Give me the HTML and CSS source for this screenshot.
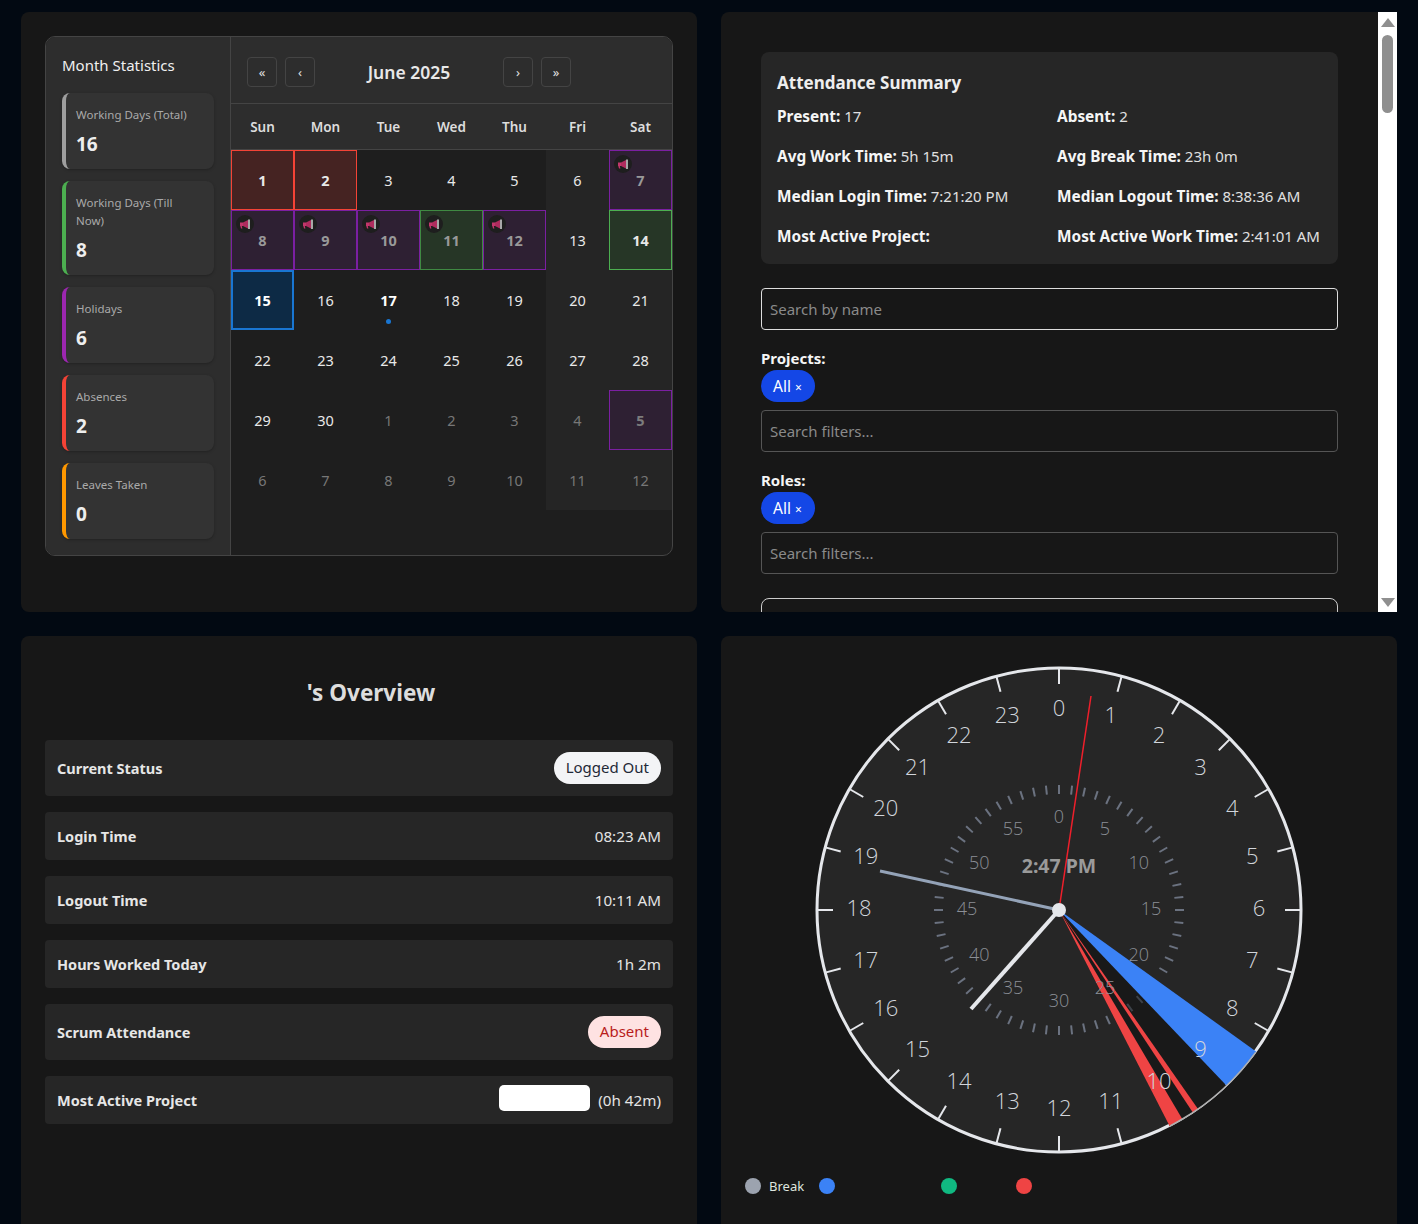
FILE: index.html
```html
<!DOCTYPE html>
<html lang="en">
<head>
<meta charset="utf-8">
<title>Dashboard</title>
<link rel="stylesheet" href="styles.css">
</head>
<body>
<main class="dashboard">

<section class="panel panel-calendar">
  <div class="calendar">
    <aside class="stats">
      <h3 class="stats-title">Month Statistics</h3>
      <div class="stat stat-grey"><div class="stat-label">Working Days (Total)</div><div class="stat-value">16</div></div>
      <div class="stat stat-green"><div class="stat-label">Working Days (Till Now)</div><div class="stat-value">8</div></div>
      <div class="stat stat-purple"><div class="stat-label">Holidays</div><div class="stat-value">6</div></div>
      <div class="stat stat-red"><div class="stat-label">Absences</div><div class="stat-value">2</div></div>
      <div class="stat stat-orange"><div class="stat-label">Leaves Taken</div><div class="stat-value">0</div></div>
    </aside>
    <div class="cal-main">
      <div class="cal-head">
        <button class="nav-btn">«</button>
        <button class="nav-btn">‹</button>
        <div class="cal-title">June 2025</div>
        <button class="nav-btn">›</button>
        <button class="nav-btn">»</button>
      </div>
      <div class="weekdays">
        <div>Sun</div><div>Mon</div><div>Tue</div><div>Wed</div><div>Thu</div><div>Fri</div><div>Sat</div>
      </div>
      <div class="days" id="days"></div>
    </div>
  </div>
</section>

<section class="panel panel-attendance">
  <div class="attendance-scroll">
    <div class="summary">
      <h3 class="summary-title">Attendance Summary</h3>
      <div class="summary-grid">
        <p><b>Present:</b> 17</p><p><b>Absent:</b> 2</p>
        <p><b>Avg Work Time:</b> 5h 15m</p><p><b>Avg Break Time:</b> 23h 0m</p>
        <p><b>Median Login Time:</b> 7:21:20 PM</p><p><b>Median Logout Time:</b> 8:38:36 AM</p>
        <p><b>Most Active Project:</b></p><p><b>Most Active Work Time:</b> 2:41:01 AM</p>
      </div>
    </div>
    <input class="search search-name" placeholder="Search by name">
    <div class="filter">
      <label class="filter-label">Projects:</label>
      <span class="pill">All <small>×</small></span>
      <input class="search" placeholder="Search filters...">
    </div>
    <div class="filter">
      <label class="filter-label">Roles:</label>
      <span class="pill">All <small>×</small></span>
      <input class="search" placeholder="Search filters...">
    </div>
    <div class="long-box"></div>
  </div>
  <div class="scrollbar">
    <svg class="arrow" width="14" height="9" viewBox="0 0 14 9"><path d="M7 0L14 9H0Z"/></svg>
    <div class="thumb"></div>
    <svg class="arrow arrow-down" width="14" height="9" viewBox="0 0 14 9"><path d="M7 9L14 0H0Z"/></svg>
  </div>
</section>

<section class="panel panel-overview">
  <h2 class="overview-title"><span class="name-gap"></span>'s Overview</h2>
  <div class="rows">
    <div class="row"><b>Current Status</b><span class="badge badge-light">Logged Out</span></div>
    <div class="row"><b>Login Time</b><span>08:23 AM</span></div>
    <div class="row"><b>Logout Time</b><span>10:11 AM</span></div>
    <div class="row"><b>Hours Worked Today</b><span>1h 2m</span></div>
    <div class="row"><b>Scrum Attendance</b><span class="badge badge-absent">Absent</span></div>
    <div class="row"><b>Most Active Project</b><span class="project"><i class="redact"></i>(0h 42m)</span></div>
  </div>
</section>

<section class="panel panel-clock">
  <svg class="clock" id="clock" width="490" height="490" viewBox="814 665 490 490"></svg>
  <div class="legend">
    <span class="dot dot-grey"></span><span class="legend-text">Break</span>
    <span class="dot dot-blue"></span><span class="legend-gap-a"></span>
    <span class="dot dot-green"></span><span class="legend-gap-b"></span>
    <span class="dot dot-red"></span>
  </div>
</section>

</main>
<script src="clock.js"></script>
</body>
</html>
```
FILE: styles.css
```css
* { box-sizing: border-box; }
html, body { margin: 0; height: 1224px; overflow: hidden; }
body {
  background: #020912;
  color: #e6e6e6;
  font-family: "Noto Sans", "Open Sans", "Liberation Sans", sans-serif;
}
.dashboard {
  display: grid;
  grid-template-columns: 676px 676px;
  grid-auto-rows: 600px;
  gap: 24px;
  padding: 12px 21px;
}
.panel { background: #171717; border-radius: 8px; }

/* calendar panel */
.panel-calendar { padding: 24px; }
.calendar {
  display: flex;
  height: 520px;
  border: 1px solid #444;
  border-radius: 10px;
  overflow: hidden;
  background: #1e1e1e;
}
.stats {
  width: 185px;
  flex: none;
  background: #2d2d2d;
  border-right: 1px solid #444;
  padding: 16px 16px 0;
  display: flex;
  flex-direction: column;
  gap: 12px;
}
.stats-title { margin: 0; font-size: 15px; line-height: 24px; font-weight: 400; color: #f0f0f0; height: 28px; }
.stat {
  background: #333;
  border-left: 4px solid #999;
  border-radius: 8px;
  padding: 13px 18px 11px 10px;
  box-shadow: 0 1px 3px rgba(0,0,0,.25);
}
.stat-grey { border-left-color: #9e9e9e; }
.stat-green { border-left-color: #4caf50; }
.stat-purple { border-left-color: #9c27b0; }
.stat-red { border-left-color: #f44336; }
.stat-orange { border-left-color: #ff9800; }
.stat-label { font-size: 11.5px; line-height: 18px; color: #aaa; }
.stat-value { font-size: 19px; line-height: 28px; margin-top: 6px; font-weight: 700; color: #eee; }

.cal-main { flex: 1; min-width: 0; }
.cal-head {
  height: 67px;
  background: #2d2d2d;
  border-bottom: 1px solid #444;
  padding: 20px 16px 0;
  display: flex;
  gap: 8px;
}
.nav-btn {
  width: 30px;
  height: 30px;
  padding: 0;
  background: transparent;
  border: 1px solid #444;
  border-radius: 4px;
  color: #e0e0e0;
  font-family: inherit;
  font-size: 13px;
}
.cal-title { width: 172px; text-align: center; font-size: 17.5px; line-height: 30px; font-weight: 600; color: #e8e8e8; }
.weekdays {
  display: grid;
  grid-template-columns: repeat(7, 63px);
  height: 46px;
  background: #2d2d2d;
  border-bottom: 1px solid #444;
  font-size: 13.5px;
  font-weight: 600;
  color: #ddd;
  text-align: center;
  line-height: 46px;
}
.days { display: grid; grid-template-columns: repeat(7, 63px); grid-auto-rows: 60px; }
.day {
  position: relative;
  display: flex;
  align-items: center;
  justify-content: center;
  padding-bottom: 1px;
  font-size: 14.5px;
  color: #e8e8e8;
  border: 1px solid transparent;
}
.weekend { background: #252525; }
.other { color: #777; }
.absent { background: #452322; border-color: #f44336; font-weight: 700; }
.present { background: #263626; border-color: #4caf50; font-weight: 700; }
.holiday { background: #2e2033; border-color: #7b1fa2; font-weight: 700; color: #999; }
.other.holiday { color: #7c7c7c; }
.holiday-green { background: #263626; border-color: #3f8a42; font-weight: 700; color: #999; }
.selected { background: #0d2a45; border: 2px solid #1976d2; font-weight: 700; color: #fff; }
.today { font-weight: 700; color: #fff; }
.today::after {
  content: "";
  position: absolute;
  left: 28px;
  bottom: 5px;
  width: 5px;
  height: 5px;
  border-radius: 50%;
  background: #1976d2;
}
.megaphone {
  position: absolute;
  left: 4px;
  top: 4px;
  width: 18px;
  height: 18px;
  border-radius: 50%;
  background: #1e1e1e;
  display: flex;
  align-items: center;
  justify-content: center;
}

/* attendance panel */
.panel-attendance {
  border-radius: 8px 0 0 8px;
  height: 600px;
  display: flex;
  overflow: hidden;
}
.attendance-scroll { flex: 1; min-width: 0; padding: 40px 40px 0; overflow: hidden; }
.scrollbar {
  width: 19px;
  flex: none;
  background: #fff;
  display: flex;
  flex-direction: column;
  align-items: center;
  padding-top: 6px;
}
.arrow { display: block; fill: #8f8f8f; }
.arrow-down { margin-top: 485px; }
.thumb { width: 11px; height: 78px; margin-top: 8px; border-radius: 6px; background: #8f8f8f; }
.summary { background: #262626; border-radius: 8px; padding: 16px; height: 212px; }
.summary-title { margin: 0; font-size: 17px; line-height: 30px; font-weight: 700; color: #eee; }
.summary-grid { display: grid; grid-template-columns: 280px 1fr; grid-auto-rows: 40px; margin-top: 6px; }
.summary-grid p { margin: 0; font-size: 15px; line-height: 24px; white-space: nowrap; color: #e0e0e0; }
.summary-grid b { color: #f5f5f5; font-size: 15.4px; }
.search {
  display: block;
  width: 100%;
  height: 42px;
  padding: 0 8px;
  background: #171717;
  border: 1px solid #555;
  border-radius: 4px;
  color: #eee;
  font-family: inherit;
  font-size: 15px;
}
.search::placeholder { color: #8a8a8a; opacity: 1; }
.search-name { margin-top: 24px; border-color: #ddd; }
.filter { margin-top: 16px; }
.filter-label { display: block; font-size: 15px; line-height: 24px; font-weight: 700; color: #f5f5f5; }
.pill {
  display: block;
  width: 54px;
  height: 32px;
  padding: 0 12px;
  border-radius: 16px;
  background: #1447e6;
  color: #fff;
  font-size: 15.5px;
  line-height: 32px;
}
.pill small { font-size: 12px; }
.filter .search { margin-top: 8px; }
.long-box { margin-top: 24px; height: 200px; border: 1px solid #ccc; border-radius: 8px; }

/* overview panel */
.panel-overview { padding: 40px 24px 0; }
.overview-title { margin: 0 0 30px; height: 34px; text-align: center; font-size: 22.5px; line-height: 34px; font-weight: 700; color: #ddd; }
.name-gap { display: inline-block; width: 24px; }
.rows { display: flex; flex-direction: column; gap: 16px; }
.row {
  display: flex;
  justify-content: space-between;
  align-items: center;
  padding: 12px;
  min-height: 48px;
  background: #262626;
  border-radius: 4px;
  font-size: 15.2px;
  line-height: 22px;
  color: #e4e4e4;
}
.row > b { color: #e6e6e6; font-size: 14.5px; margin-bottom: 1px; }
.row > span { margin-bottom: 1px; }
.row > .badge { height: 32px; margin: 0; padding: 0 12px 1px; border-radius: 16px; line-height: 31px; font-size: 15px; }
.badge-light { background: #f3f4f6; color: #1f2937; }
.badge-absent { background: #fee2e2; color: #b91c1c; }
.project { display: flex; align-items: center; gap: 8px; }
.redact { display: block; width: 91px; height: 26px; margin: -3px 0 0; background: #fff; border-radius: 5px; }

/* clock panel */
.panel-clock { padding-top: 29px; }
.clock { display: block; margin: 0 auto; }
.legend {
  display: flex;
  align-items: center;
  margin: 21px 0 0 24px;
  height: 20px;
  font-size: 13px;
  color: #dfe5df;
}
.dot { width: 16px; height: 16px; border-radius: 50%; flex: none; }
.dot-grey { background: #9ca3af; }
.dot-blue { background: #3b82f6; }
.dot-green { background: #10b981; }
.dot-red { background: #ef4444; }
.legend-text { margin: 0 15px 0 8px; }
.legend-gap-a { width: 106px; }
.legend-gap-b { width: 59px; }

/* clock svg parts */
.face { fill: #262626; stroke: #e5e7eb; stroke-width: 3; }
.ring-edge { fill: none; stroke: #b0b0b0; stroke-width: 1.5; }
.hour-tick { stroke: #e5e7eb; stroke-width: 2; }
.min-tick { stroke: #6b7280; stroke-width: 2; }
.min-tick-dim { stroke: #3d4249; stroke-width: 2; }
.hour-label { font-size: 22px; font-weight: 300; fill: #d1d5db; text-anchor: middle; font-family: "Open Sans", "Noto Sans", sans-serif; }
.min-label { font-size: 18px; font-weight: 300; fill: #8b8f96; text-anchor: middle; font-family: "Open Sans", "Noto Sans", sans-serif; }
.time-text { font-size: 19.5px; font-weight: 700; fill: #9a9a9a; text-anchor: middle; }
.hand-sec { stroke: #ef1f2b; stroke-width: 1.5; }
.hand-min { stroke: #94a3b8; stroke-width: 3; }
.hand-hour { stroke: #e5e7eb; stroke-width: 4; }
.hub { fill: #e5e7eb; }
.sec-blue { fill: #3b82f6; }
.sec-dark { fill: #191919; }
.sec-red { fill: #ef4444; }
```
FILE: clock.js
```js
(function () {
  var NS = 'http://www.w3.org/2000/svg';
  var CX = 1059, CY = 910;
  var svg = document.getElementById('clock');

  function el(name, attrs, text) {
    var n = document.createElementNS(NS, name);
    for (var k in attrs) n.setAttribute(k, attrs[k]);
    if (text !== undefined) n.textContent = text;
    svg.appendChild(n);
    return n;
  }
  function pt(deg, r) {
    var a = deg * Math.PI / 180;
    return [CX + r * Math.sin(a), CY - r * Math.cos(a)];
  }
  function tick(deg, r1, r2, cls) {
    var a = pt(deg, r1), b = pt(deg, r2);
    el('line', { x1: a[0], y1: a[1], x2: b[0], y2: b[1], 'class': cls });
  }

  el('circle', { cx: CX, cy: CY, r: 242, 'class': 'face' });

  [['sec-dark', 'M1059 910L1226.7 1085.8A243 243 0 0 1 1169.7 1126.3Z'],
   ['sec-blue', 'M1059 910L1256.4 1051.7A243 243 0 0 1 1226.7 1085.8Z'],
   ['sec-red', 'M1059 910L1198 1109A243 243 0 0 1 1193 1112.7Z'],
   ['sec-red', 'M1059 910L1182.4 1119.3A243 243 0 0 1 1169.7 1126.3Z']
  ].forEach(function (s) { el('path', { d: s[1], 'class': s[0] }); });
  el('path', { d: 'M1255.8 1052.1A242.5 242.5 0 0 1 1182.4 1119A242.5 242.5 0 0 1 1170 1126', 'class': 'ring-edge' });

  for (var m = 0; m < 60; m++) {
    if (m === 21 || m === 22 || m === 25) continue;
    tick(m * 6, 116, 125, (m === 23 || m === 24) ? 'min-tick-dim' : 'min-tick');
  }
  for (var h = 0; h < 24; h++) {
    if (h === 9 || h === 10) continue;
    tick(h * 15, 226, 242, 'hour-tick');
  }
  for (h = 0; h < 24; h++) {
    var p = pt(h * 15, 200);
    el('text', { x: p[0], y: p[1] + 6, 'class': 'hour-label' }, String(h));
  }
  for (m = 0; m < 60; m += 5) {
    var q = pt(m * 6, 92);
    el('text', { x: q[0], y: q[1] + 4.5, 'class': 'min-label' }, String(m));
  }
  el('text', { x: CX, y: 873, 'class': 'time-text' }, '2:47 PM');
  el('line', { x1: CX, y1: CY, x2: 1091, y2: 696, 'class': 'hand-sec' });
  el('line', { x1: CX, y1: CY, x2: 880, y2: 871, 'class': 'hand-min' });
  el('line', { x1: CX, y1: CY, x2: 971, y2: 1009, 'class': 'hand-hour' });
  el('circle', { cx: CX, cy: CY, r: 7, 'class': 'hub' });
})();

(function () {
  var days = document.getElementById('days');
  var ICON = '<span class="megaphone"><svg width="12" height="12" viewBox="0 0 12 12">' +
    '<path d="M1 4.5H4V8H2.8L3.4 10.4H2L1.3 8H1Z" fill="#c2366b"/>' +
    '<path d="M4 4.5L9 2V10.4L4 8Z" fill="#b02c5e"/>' +
    '<path d="M9 1.4H11V11H9Z" fill="#a8a8a8"/></svg></span>';
  var spec = {
    '1': 'absent', '2': 'absent',
    '7': 'holiday m', '8': 'holiday m', '9': 'holiday m', '10': 'holiday m',
    '11': 'holiday-green m', '12': 'holiday m', '14': 'present',
    '15': 'selected', '17': 'today'
  };
  function cell(label, other, idx, extra) {
    var d = document.createElement('div');
    var cls = 'day';
    var col = idx % 7;
    if (col >= 5) cls += ' weekend';
    if (other) cls += ' other';
    var c = extra || '';
    var hasIcon = / m$/.test(c);
    c = c.replace(/ m$/, '');
    if (c) cls += ' ' + c;
    d.className = cls;
    d.innerHTML = (hasIcon ? ICON : '') + label;
    days.appendChild(d);
  }
  var i = 0, n;
  for (n = 1; n <= 30; n++) { cell(n, false, i, spec[n]); i++; }
  for (n = 1; n <= 12; n++) { cell(n, true, i, n === 5 ? 'holiday' : ''); i++; }
})();
```
